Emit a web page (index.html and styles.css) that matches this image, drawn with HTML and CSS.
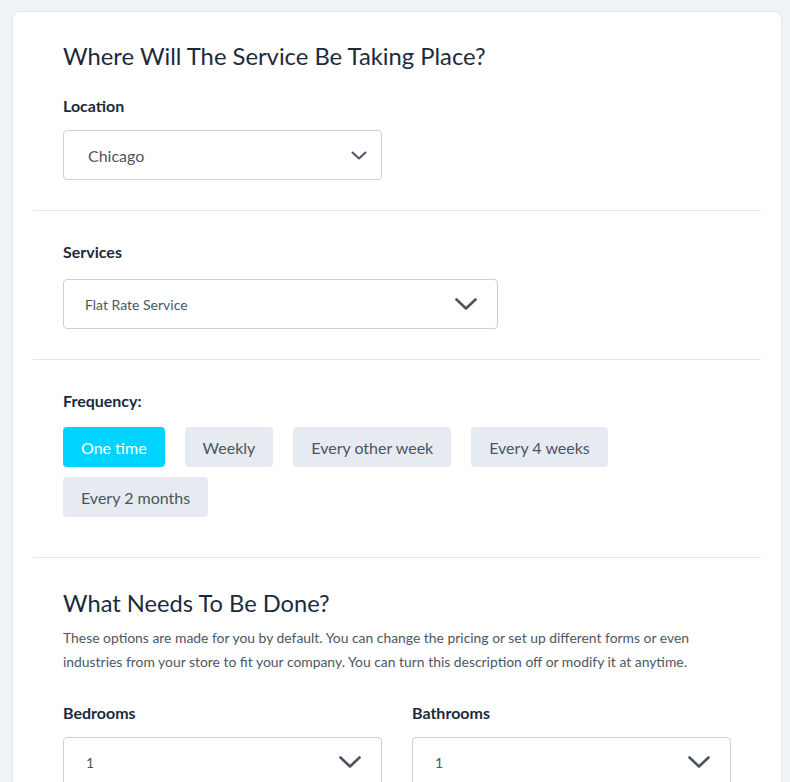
FILE: index.html
```html
<!DOCTYPE html>
<html lang="en">
<head>
<meta charset="utf-8">
<title>Booking</title>
<link rel="stylesheet" href="styles.css">
</head>
<body>
<div class="page">
  <div class="card">
    <section class="section first">
      <h2 class="heading">Where Will The Service Be Taking Place?</h2>
      <div class="label label-loc">Location</div>
      <div class="select select-loc">
        <span class="select-text">Chicago</span>
        <svg class="chev chev-sm" width="16" height="9" viewBox="0 0 16 9"><polyline points="1.5,1.5 8,7.5 14.5,1.5" fill="none" stroke="#4a5561" stroke-width="2" stroke-linecap="round" stroke-linejoin="round"/></svg>
      </div>
    </section>
    <section class="section">
      <div class="label">Services</div>
      <div class="select select-svc">
        <span class="select-text small">Flat Rate Service</span>
        <svg class="chev chev-lg" width="22" height="12" viewBox="0 0 22 12"><polyline points="1.5,1.5 11,10.5 20.5,1.5" fill="none" stroke="#4a5561" stroke-width="2.6" stroke-linecap="round" stroke-linejoin="round"/></svg>
      </div>
    </section>
    <section class="section">
      <div class="label label-freq">Frequency:</div>
      <div class="freq">
        <button class="opt active">One time</button>
        <button class="opt">Weekly</button>
        <button class="opt">Every other week</button>
        <button class="opt">Every 4 weeks</button>
        <button class="opt">Every 2 months</button>
      </div>
    </section>
    <section class="section last">
      <h2 class="heading">What Needs To Be Done?</h2>
      <p class="desc">These options are made for you by default. You can change the pricing or set up different forms or even industries from your store to fit your company. You can turn this description off or modify it at anytime.</p>
      <div class="grid">
        <div class="field">
          <div class="label">Bedrooms</div>
          <div class="select select-num">
            <span class="select-text small">1</span>
            <svg class="chev chev-lg" width="22" height="12" viewBox="0 0 22 12"><polyline points="1.5,1.5 11,10.5 20.5,1.5" fill="none" stroke="#4a5561" stroke-width="2.6" stroke-linecap="round" stroke-linejoin="round"/></svg>
          </div>
        </div>
        <div class="field">
          <div class="label">Bathrooms</div>
          <div class="select select-num">
            <span class="select-text small">1</span>
            <svg class="chev chev-lg" width="22" height="12" viewBox="0 0 22 12"><polyline points="1.5,1.5 11,10.5 20.5,1.5" fill="none" stroke="#4a5561" stroke-width="2.6" stroke-linecap="round" stroke-linejoin="round"/></svg>
          </div>
        </div>
      </div>
    </section>
  </div>
</div>
</body>
</html>
```
FILE: styles.css
```css
* { box-sizing: border-box; }
html, body {
  margin: 0;
  padding: 0;
  background: #eff3f7;
  font-family: Lato, "Open Sans", "Liberation Sans", sans-serif;
  color: #1b2b3d;
}
.page {
  padding: 11px 8px 0 12px;
  height: 782px;
  overflow: hidden;
}
.card {
  background: #ffffff;
  border: 1px solid #e1e6eb;
  border-radius: 8px;
  padding: 0 20px;
  min-height: 900px;
}
.section {
  padding: 31px 30px 30px;
  border-bottom: 1px solid #e4e7eb;
}
.section.first { padding-top: 30px; }
.section.last { border-bottom: none; padding-top: 31px; }
.heading {
  margin: 0;
  font-size: 23.8px;
  line-height: 29px;
  font-weight: 400;
  color: #1b2b3d;
}
.last .heading { font-size: 23.7px; }
.first .heading { margin-bottom: 25px; }
.label {
  font-size: 16px;
  line-height: 20px;
  font-weight: 700;
  color: #1b2b3d;
  margin-bottom: 17px;
}
.label-loc { margin-bottom: 14px; }
.label-freq { margin-bottom: 16px; }
.select {
  display: flex;
  align-items: center;
  justify-content: space-between;
  height: 50px;
  border: 1px solid #c9d0d7;
  border-radius: 4px;
  padding: 0 20px 0 24px;
  background: #fff;
}
.select-loc { width: 319px; padding-right: 14px; }
.select-svc { width: 435px; padding-left: 21px; }
.select-num { padding-left: 22px; }
.select-text {
  font-size: 16px;
  color: #4b5764;
}
.select-text.small { font-size: 14px; }
.chev { display: block; flex: none; }
.freq {
  display: flex;
  flex-wrap: wrap;
  gap: 10px 20px;
  margin-bottom: 10px;
}
.opt {
  height: 40px;
  border: none;
  border-radius: 4px;
  padding: 0 18px;
  background: #e5ebf1;
  color: #4a5561;
  font-family: Lato, "Open Sans", "Liberation Sans", sans-serif;
  font-size: 16px;
  cursor: pointer;
}
.opt.active {
  background: #00d3ff;
  color: #ffffff;
}
.desc {
  margin: 8px 0 29px;
  font-size: 13.9px;
  line-height: 24px;
  color: #4b5764;
}
.grid {
  display: grid;
  grid-template-columns: 1fr 1fr;
  column-gap: 30px;
}
.grid .label { margin-bottom: 14px; }
```
